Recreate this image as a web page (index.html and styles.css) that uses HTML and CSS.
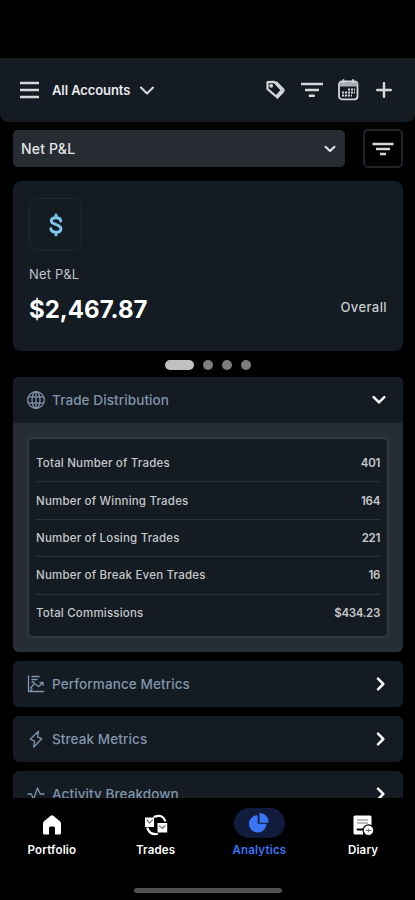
FILE: index.html
```html
<!DOCTYPE html>
<html lang="en">
<head>
    <meta charset="UTF-8">
    <meta name="viewport" content="width=device-width, initial-scale=1.0">
    <title>Analytics</title>
    <link rel="stylesheet" href="styles.css">
</head>
<body>
    <div class="app">
        <header class="topbar">
            <svg class="menu" width="20" height="18" viewBox="0 0 20 18"><path d="M0 2h19M0 9h19M0 16h19"/></svg>
            <span class="account">All Accounts</span>
            <svg class="chevron" width="14" height="9" viewBox="0 0 14 9"><path d="M1 1.5l6 6 6-6"/></svg>
            <div class="actions">
                <svg width="22" height="20" viewBox="0 0 22 20">
                    <path class="tag" d="M3.500 2.200l6.500-.4 7 7.400q.7.900 0 1.800l-4 4.600q-1 .8-1.800 0L3.500 9z"/>
                    <circle class="fill" cx="7.200" cy="5.800" r="1.900"/>
                    <path class="tag" d="M12.500 2.500l6.700 6.700q.9 1.100 0 2.300l-6 6.300"/>
                </svg>
                <svg width="24" height="18" viewBox="0 0 24 18"><path class="thick" d="M1 3h22M5 9h14M8.800 14.800h6"/></svg>
                <svg width="21" height="22" viewBox="0 0 21 22">
                    <rect x="1" y="2.500" width="18.500" height="17.800" rx="3"/>
                    <path class="soft" d="M1.500 5q0-2 3-2h12q3 0 3 2v2.500h-18z"/>
                    <path d="M5.500 1v2M15 1v2"/>
                    <path class="days" d="M10 10.500h7M4 13.500h13M4 16.500h10"/>
                </svg>
                <svg class="plus" width="16" height="16" viewBox="0 0 16 16"><path d="M8 1.300v13.400M1.300 8h13.400"/></svg>
            </div>
        </header>

        <main class="content">
            <div class="toolbar">
                <div class="select">
                    <span>Net P&amp;L</span>
                    <svg width="12" height="8" viewBox="0 0 12 8"><path d="M1.500 1.700L6 6l4.500-4.300"/></svg>
                </div>
                <div class="filter">
                    <svg width="24" height="18" viewBox="0 0 24 18"><path d="M1.500 4h21M5 9h14M9 14h6"/></svg>
                </div>
            </div>

            <section class="summary">
                <div class="badge">
                    <svg width="16" height="26" viewBox="0 0 16 26"><path d="M12.700 9Q12.300 5.800 8 5.800 3.300 5.800 3.300 9C3.300 13 12.900 12 12.900 16.700q0 3.500-4.900 3.500-4.700 0-5.200-3.500M8 3v2.800M8 20.200V23"/></svg>
                </div>
                <div class="summary-label">Net P&amp;L</div>
                <div class="summary-row">
                    <span class="amount">$2,467.87</span>
                    <span class="period">Overall</span>
                </div>
            </section>

            <div class="dots">
                <span class="dot active"></span>
                <span class="dot"></span>
                <span class="dot"></span>
                <span class="dot"></span>
            </div>

            <section class="panel">
                <div class="panel-head">
                    <svg class="icon" width="20" height="20" viewBox="0 0 20 20"><circle cx="10" cy="10" r="8.300"/><ellipse cx="10" cy="10" rx="4" ry="8.300"/><path d="M2.500 6.800h15M2.500 13.200h15M10 1.700v16.600"/></svg>
                    <span class="title">Trade Distribution</span>
                    <svg class="arrow" width="14" height="10" viewBox="0 0 14 10"><path d="M1.700 2.200L7 7.400l5.300-5.200"/></svg>
                </div>
                <div class="panel-body">
                    <div class="table">
                        <div class="row"><span>Total Number of Trades</span><span class="value">401</span></div>
                        <div class="row"><span>Number of Winning Trades</span><span class="value">164</span></div>
                        <div class="row"><span>Number of Losing Trades</span><span class="value">221</span></div>
                        <div class="row"><span>Number of Break Even Trades</span><span class="value">16</span></div>
                        <div class="row"><span>Total Commissions</span><span class="value">$434.23</span></div>
                    </div>
                </div>
            </section>

            <section class="panel">
                <div class="panel-head">
                    <svg class="icon" width="20" height="20" viewBox="0 0 20 20"><path d="M2.500 2v15.500h15M4.500 14l4-4.500 4 3 4.500-3.700M14 8.500l3-.2v3M6 2.500h7M6 5.500h5M6 8h2M4.500 17l1.500-2"/></svg>
                    <span class="title">Performance Metrics</span>
                    <svg class="arrow" width="10" height="14" viewBox="0 0 10 14"><path d="M2 1.700L7.300 7 2 12.300"/></svg>
                </div>
            </section>
            <section class="panel">
                <div class="panel-head">
                    <svg class="icon" width="20" height="20" viewBox="0 0 20 20"><path d="M12.500 2.200L4.200 10.200l4.400 2-.9 5.800 8-8.300-4.200-1.900z"/></svg>
                    <span class="title">Streak Metrics</span>
                    <svg class="arrow" width="10" height="14" viewBox="0 0 10 14"><path d="M2 1.700L7.300 7 2 12.300"/></svg>
                </div>
            </section>
            <section class="panel">
                <div class="panel-head">
                    <svg class="icon" width="20" height="20" viewBox="0 0 20 20"><path d="M2 10h3.200l2.500 5 3.800-11 2.700 6H18"/></svg>
                    <span class="title">Activity Breakdown</span>
                    <svg class="arrow" width="10" height="14" viewBox="0 0 10 14"><path d="M2 1.700L7.300 7 2 12.300"/></svg>
                </div>
            </section>
        </main>

        <nav class="tabs">
            <div class="tab">
                <div class="tab-icon">
                    <svg width="20" height="20" viewBox="0 0 20 20"><path d="M10 .3q.8 0 1.600.6l6.300 5.300q1.100 1 1.100 2.300v9.500q0 1.500-1.500 1.500H13v-6.500q0-1.500-1.500-1.500h-3Q7 11.500 7 13v6.500H2.500Q1 19.500 1 18V8.500q0-1.300 1.100-2.300L8.400.9Q9.200.3 10 .3z"/></svg>
                </div>
                <span>Portfolio</span>
            </div>
            <div class="tab">
                <div class="tab-icon">
                    <svg width="24" height="22" viewBox="0 0 24 22">
                        <path d="M1 3.500h9V13H1zM13.500 9h9.700v9.500h-9.700z"/>
                        <path class="ring" d="M10.500 2.800q8-3 10.500 3.700M3.500 14.500Q6 21 13 20"/>
                        <path class="mark" d="M3 6l2.500 3L8.500 6M15.500 12l3 2.500 2.500-3"/>
                    </svg>
                </div>
                <span>Trades</span>
            </div>
            <div class="tab current">
                <div class="tab-icon">
                    <svg width="22" height="20" viewBox="0 0 22 20"><path d="M9.700 2.200v8.600h8.800A8.800 8.600 0 1 1 9.700 2.200z"/><path d="M11.500 0q8.800.5 9.200 9.700h-9.200z"/></svg>
                </div>
                <span>Analytics</span>
            </div>
            <div class="tab">
                <div class="tab-icon">
                    <svg width="22" height="22" viewBox="0 0 22 22">
                        <path d="M3 1.500h15q1.500 0 1.500 1.500v8Q12 10 11 20.500H3Q1.500 20.500 1.500 19V3q0-1.500 1.500-1.500z"/>
                        <path class="mark" d="M5.500 6h10M5.500 9h10"/>
                        <path class="gap" d="M5.500 15.500h5"/>
                        <circle class="cutout" cx="16.500" cy="16.300" r="5.400"/>
                        <path class="mark" d="M14 16.300h5M16.500 15v2.600"/>
                    </svg>
                </div>
                <span>Diary</span>
            </div>
        </nav>
        <div class="home-bar"></div>
    </div>
</body>
</html>
```
FILE: styles.css
```css
* {
    box-sizing: border-box;
}

body {
    margin: 0;
    background: #000;
    color: #d5d7da;
    font-family: Inter, "Liberation Sans", sans-serif;
}

svg {
    display: block;
    flex: none;
    fill: none;
    stroke: currentColor;
    stroke-linecap: round;
    stroke-linejoin: round;
}

.app {
    display: flex;
    flex-direction: column;
    height: 900px;
    padding-top: 58px;
    overflow: hidden;
}

/* header */
.topbar {
    display: flex;
    align-items: center;
    flex: none;
    height: 64px;
    padding: 0 23px 0 20px;
    background: #141b23;
    border-radius: 0 0 8px 8px;
}

.menu {
    stroke-width: 2.3;
    stroke-linecap: butt;
}

.account {
    margin-left: 12px;
    color: #e9eaec;
    font-size: 13px;
    font-weight: 600;
    letter-spacing: -.1px;
}

.chevron {
    margin-left: 10px;
    stroke-width: 2.1;
}

.actions {
    display: flex;
    align-items: center;
    gap: 14px;
    margin-left: auto;
    stroke-width: 1.8;
}

.actions .fill {
    fill: currentColor;
    stroke: none;
}

.actions .tag {
    stroke-width: 2.2;
}

.actions .thick {
    stroke-width: 2.4;
    stroke-linecap: butt;
}

.actions .soft {
    fill: #a9acb0;
    stroke: none;
}

.actions .days {
    stroke-width: 1.9;
    stroke-linecap: butt;
    stroke-dasharray: 2.1 .9;
}

.actions .plus {
    margin-left: 3px;
    stroke-width: 2.5;
}

.content {
    flex: none;
    height: 676px;
    padding: 7px 12px 0 13px;
    overflow: hidden;
}

.toolbar {
    display: flex;
    align-items: center;
    justify-content: space-between;
    height: 39px;
}

.select {
    display: flex;
    align-items: center;
    justify-content: space-between;
    width: 332px;
    height: 37px;
    padding: 0 9px 0 8px;
    background: #272c32;
    border-radius: 5px;
    color: #e4e5e7;
    font-size: 14px;
    font-weight: 500;
    letter-spacing: .2px;
}

.select svg {
    stroke-width: 2;
}

.filter {
    display: flex;
    align-items: center;
    justify-content: center;
    width: 40px;
    height: 39px;
    border: 2px solid #20252a;
    border-radius: 5px;
}

.filter svg {
    stroke-width: 2.6;
    stroke-linecap: butt;
}

/* summary card */
.summary {
    height: 170px;
    margin-top: 13px;
    padding: 17px 17px 0 16px;
    background: #141b23;
    border-radius: 8px;
}

.badge {
    display: flex;
    align-items: center;
    justify-content: center;
    width: 53px;
    height: 53px;
    border: 1.5px solid #1e2730;
    border-radius: 9px;
    color: #7cc7ec;
}

.badge svg {
    stroke-width: 2.9;
}

.summary-label {
    margin-top: 14px;
    font-size: 13px;
    line-height: 18px;
    letter-spacing: .2px;
    color: #c0c3c6;
}

.summary-row {
    display: flex;
    align-items: center;
    justify-content: space-between;
    height: 40px;
    margin-top: 6px;
}

.amount {
    color: #fff;
    font-size: 24px;
    font-weight: 700;
}

.period {
    margin-top: -4px;
    margin-right: -1px;
    font-size: 13px;
    font-weight: 500;
    letter-spacing: .4px;
    color: #c8cbce;
}

.dots {
    display: flex;
    align-items: center;
    justify-content: center;
    gap: 9px;
    height: 26px;
    padding-top: 2px;
}

.dot {
    width: 10px;
    height: 10px;
    border-radius: 5px;
    background: #7c7e7f;
}

.dot.active {
    width: 29px;
    background: #bfc0bf;
}

/* collapsible panels */
.panel {
    margin-bottom: 9px;
    background: #272d35;
    border-radius: 6px;
    overflow: hidden;
}

.panel-head {
    display: flex;
    align-items: center;
    height: 46px;
    padding: 0 17px 0 13px;
    background: #141b23;
    color: #8195ab;
}

.title {
    margin-left: 6px;
    font-size: 13.5px;
    font-weight: 500;
    letter-spacing: .1px;
}

.icon {
    stroke-width: 1.3;
}

.arrow {
    margin-left: auto;
    color: #f5f5f5;
    stroke-width: 2.5;
}

.panel-body {
    padding: 14px;
}

.table {
    height: 201px;
    padding: 6px 7px 0;
    background: #141b23;
    border: 2px solid #303a43;
    border-radius: 6px;
}

.row {
    display: flex;
    align-items: center;
    justify-content: space-between;
    height: 37.4px;
    border-bottom: 1.5px solid #29323a;
    color: #c6c8c9;
    font-size: 11.5px;
    font-weight: 500;
    letter-spacing: .2px;
}

.row:last-child {
    border-bottom: none;
}

.value {
    font-weight: 600;
    letter-spacing: -.3px;
}

/* bottom navigation */
.tabs {
    display: flex;
    flex: none;
    height: 90px;
    padding-top: 10px;
    color: #fff;
}

.tab {
    display: flex;
    flex: 1;
    flex-direction: column;
    align-items: center;
    font-size: 11.5px;
    font-weight: 600;
    letter-spacing: .2px;
    line-height: 16px;
}

.tab-icon {
    display: flex;
    align-items: center;
    justify-content: center;
    width: 51px;
    height: 30px;
    margin-bottom: 4px;
    padding-top: 3px;
    border-radius: 15px;
}

.tab svg {
    fill: currentColor;
    stroke: none;
}

.tab .ring {
    fill: none;
    stroke: currentColor;
    stroke-width: 2.2;
}

.tab .mark {
    fill: none;
    stroke: #777;
    stroke-width: 1.2;
}

.tab .gap {
    stroke: #000;
    stroke-width: 1.8;
}

.tab .cutout {
    stroke: #000;
    stroke-width: 1.2;
}

.current {
    color: #3975f5;
}

.current .tab-icon {
    padding-top: 0;
    background: #111b3b;
}

.home-bar {
    flex: none;
    width: 148px;
    height: 5px;
    margin: 0 auto;
    background: #515151;
    border-radius: 3px;
}
```
